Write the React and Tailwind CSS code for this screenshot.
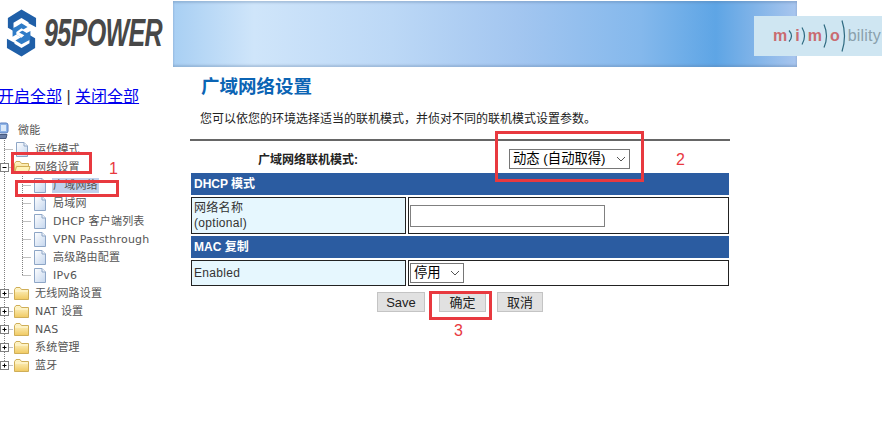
import React from "react";

const cjk = "font-['Liberation_Sans','Noto_Sans_CJK_SC',sans-serif]";
const treeFont = "font-['DejaVu_Sans','Noto_Sans_CJK_SC',sans-serif]";

function Lines({ cells }) {
  // every cell is 18x18, same idea as the line gifs of a dtree menu
  return (
    <svg width={cells.length * 18} height="18" className="shrink-0">
      {cells.map((c, i) => {
        const x = i * 18 + 9.5;
        const dots = { stroke: "#808080", strokeWidth: 1, strokeDasharray: "1 1", fill: "none" };
        return (
          <g key={i}>
            {(c === "bar" || c === "tee" || c === "plus-mid" || c === "minus-mid") && (
              <path d={`M${x} 0V18`} {...dots} />
            )}
            {(c === "end" || c === "plus-end") && <path d={`M${x} 0V9`} {...dots} />}
            {c !== "bar" && c !== "empty" && <path d={`M${x} 9.5H${i * 18 + 18}`} {...dots} />}
            {(c === "plus-mid" || c === "minus-mid" || c === "plus-end") && (
              <g>
                <rect x={x - 4} y="5.5" width="8" height="8" fill="#fff" stroke="#808080" />
                <path d={`M${x - 2} 9.5H${x + 2}`} stroke="#000" />
                {c !== "minus-mid" && <path d={`M${x} 7.5V11.5`} stroke="#000" />}
              </g>
            )}
          </g>
        );
      })}
    </svg>
  );
}

function PageIcon() {
  return (
    <svg width="18" height="18" viewBox="0 0 18 18" className="shrink-0">
      <defs>
        <linearGradient id="pg" x1="0" y1="0" x2="1" y2="1">
          <stop offset="0" stopColor="#ffffff" />
          <stop offset="1" stopColor="#c4d6ee" />
        </linearGradient>
      </defs>
      <path d="M3.5 2.5H11L14.5 6V16.5H3.5Z" fill="url(#pg)" stroke="#8ea6c6" />
      <path d="M11 2.5V6H14.5" fill="#eef3fa" stroke="#8ea6c6" />
    </svg>
  );
}

function FolderIcon({ open }) {
  return (
    <svg width="18" height="18" viewBox="0 0 18 18" className="shrink-0">
      <defs>
        <linearGradient id="fd" x1="0" y1="0" x2="0" y2="1">
          <stop offset="0" stopColor="#fff8d0" />
          <stop offset="1" stopColor="#f0c960" />
        </linearGradient>
      </defs>
      <path d="M1.5 15.5V5.5L3 3.5H7L8.5 5.5H15.5V15.5Z" fill="url(#fd)" stroke="#cfae58" />
      {open ? (
        <path d="M1.5 15.5L3.5 8.5H17L15 15.5Z" fill="#fff3b8" stroke="#cfae58" />
      ) : (
        <path d="M2 7H15" stroke="#fff8d8" />
      )}
    </svg>
  );
}

function GlobeIcon() {
  return (
    <svg width="18" height="18" viewBox="0 0 18 18" className="shrink-0">
      <rect x="4" y="1" width="9" height="10" rx="2" fill="#8fb4e6" stroke="#5a7fc0" />
      <rect x="6" y="3" width="5" height="6" fill="#dbe9fa" />
      <path d="M3 12.5H12L11 16.5H5Z" fill="#6a7fa8" stroke="#46597e" />
    </svg>
  );
}

function TreeRow({ lines, icon, label, selected }) {
  return (
    <div className="flex h-[18px] items-center">
      <Lines cells={lines} />
      {icon}
      <span
        className={`ml-[3px] whitespace-nowrap px-[1px] leading-[15px] text-[#555] ${selected ? "bg-[#c0d2ec]" : ""}`}
      >
        {label}
      </span>
    </div>
  );
}

function Sidebar() {
  return (
    <aside className="w-[190px] shrink-0">
      <div className={`-ml-[2px] mt-[17px] text-[16px] leading-[22px] text-[#333] ${cjk}`}>
        <a href="#" className="text-[#0000ee] underline">开启全部</a>
        <span> | </span>
        <a href="#" className="text-[#0000ee] underline">关闭全部</a>
      </div>
      <div className={`-ml-[5px] mt-[14px] text-[11px] tracking-[0.2px] ${treeFont}`}>
        <div className="flex h-[18px] items-center">
          <GlobeIcon />
          <span className="ml-[5px] text-[#555]">微能</span>
        </div>
        <TreeRow lines={["tee"]} icon={<PageIcon />} label="运作模式" />
        <TreeRow lines={["minus-mid"]} icon={<FolderIcon open />} label="网络设置" />
        <TreeRow lines={["bar", "tee"]} icon={<PageIcon />} label="广域网络" selected />
        <TreeRow lines={["bar", "tee"]} icon={<PageIcon />} label="局域网" />
        <TreeRow lines={["bar", "tee"]} icon={<PageIcon />} label="DHCP 客户端列表" />
        <TreeRow lines={["bar", "tee"]} icon={<PageIcon />} label="VPN Passthrough" />
        <TreeRow lines={["bar", "tee"]} icon={<PageIcon />} label="高级路由配置" />
        <TreeRow lines={["bar", "end"]} icon={<PageIcon />} label="IPv6" />
        <TreeRow lines={["plus-mid"]} icon={<FolderIcon />} label="无线网路设置" />
        <TreeRow lines={["plus-mid"]} icon={<FolderIcon />} label="NAT 设置" />
        <TreeRow lines={["plus-mid"]} icon={<FolderIcon />} label="NAS" />
        <TreeRow lines={["plus-mid"]} icon={<FolderIcon />} label="系统管理" />
        <TreeRow lines={["plus-end"]} icon={<FolderIcon />} label="蓝牙" />
      </div>
    </aside>
  );
}

function Logo() {
  return (
    <div className="flex h-[64px] w-[173px] shrink-0 items-center pl-[6px]">
      <svg width="31" height="52" viewBox="0 0 33 52" className="shrink-0">
        <path d="M16.5 1L32 10V20L24 15.5V14.5L16.5 10L8 15V24L2 20.5V10Z" fill="#1f5fa8" />
        <path d="M16.5 51L1 42V32L9 36.5V37.5L16.5 42L25 37V28L31 31.5V42Z" fill="#1f5fa8" />
        <path d="M11 19L16.5 15.5L23 19.5L17 23L22 26L26 24V33L16.5 38L10 34L16 30.5L11 27.5L7 30V21Z" fill="#2f7cc8" />
        <path d="M16.5 21L19 22.5L14 25.5L19.5 28.5L16.5 31L11 27.5V25Z" fill="#ffffff" />
      </svg>
      <span className="ml-[7px] origin-left scale-x-[0.66] font-['Liberation_Sans',sans-serif] text-[38px] font-bold italic leading-none tracking-[-1px] text-[#484848]">
        95POWER
      </span>
    </div>
  );
}

function Arc({ h }) {
  return (
    <svg width="6" height={h} viewBox={`0 0 6 ${h}`} fill="none" stroke="#2e6a80" strokeWidth="1.2" className="mx-[1px] shrink-0">
      <path d={`M1 0.5Q6 ${h / 2} 1 ${h - 0.5}`} />
    </svg>
  );
}

function Banner() {
  return (
    <div className="relative h-[66px] w-[624px] shrink-0 bg-[linear-gradient(90deg,#a8cff3_0%,#cfe5fa_13%,#bcd8f6_35%,#a3c6f0_55%,#84b8ec_75%,#5ea5e5_87%,#7fb3e8_93%,#a9c6ee_100%)] shadow-[inset_0_2px_2px_rgba(90,120,160,0.3),inset_0_-2px_2px_rgba(90,120,160,0.3)]">
      <div className="absolute left-[581px] top-[15px] flex h-[40px] w-[128px] items-center bg-[#cfe6f2] pl-[19px] font-['Liberation_Sans',sans-serif] text-[16px] leading-none">
        <b className="text-[#c96b70]">m</b>
        <Arc h={12} />
        <b className="text-[#c96b70]">i</b>
        <Arc h={18} />
        <b className="text-[#c96b70]">m</b>
        <Arc h={24} />
        <b className="text-[#c96b70]">o</b>
        <Arc h={32} />
        <span className="tracking-[0.2px] text-[#8aa0ac]">bility</span>
      </div>
    </div>
  );
}

function SectionBar({ children }) {
  return (
    <div className="flex h-[22px] items-center bg-[#2b5ca1] pl-[3px] text-[12px] font-bold text-white">
      {children}
    </div>
  );
}

function FormRow({ height, label, children }) {
  return (
    <div className={`flex gap-[2px] ${height}`}>
      <div className="flex w-[215px] shrink-0 items-center border border-[#222] bg-[#e6f7fe] pl-[2px] text-[12px] leading-[15px] tracking-[0.3px] text-[#333]">
        {label}
      </div>
      <div className="flex flex-1 items-center border border-[#222] pl-[1px]">{children}</div>
    </div>
  );
}

function Button({ width, children }) {
  return (
    <button className={`h-[20px] border border-[#c4c4c4] bg-[#e1e1e1] text-[13px] leading-none text-[#222] ${width}`}>
      {children}
    </button>
  );
}

function NativeSelect({ width, children }) {
  return (
    <div className={`flex h-[20px] items-center justify-between border border-[#767676] bg-white pl-[3px] pr-[2px] text-[13.33px] text-black ${width}`}>
      <span>{children}</span>
      <svg width="12" height="12" viewBox="0 0 12 12" fill="none" stroke="#555" strokeWidth="1">
        <path d="M2 4L6 8L10 4" />
      </svg>
    </div>
  );
}

function Main() {
  return (
    <main className={`w-[540px] ${cjk}`}>
      <h1 className="ml-[11px] mt-[5px] text-[18.5px] font-bold leading-[26px] text-[#0b64b4]">广域网络设置</h1>
      <p className="ml-[10px] mt-[10px] text-[12px] leading-[18px] text-[#222]">
        您可以依您的环境选择适当的联机模式，并侦对不同的联机模式设置参数。
      </p>
      <div className="mt-[11px] h-[2px] bg-[#666]" />

      <div className="ml-[1px] w-[538px]">
        <div className="flex h-[32px] items-center">
          <div className="w-[232px] pl-[2px] pt-[6px] text-center text-[12px] font-bold text-[#222]">广域网络联机模式:</div>
          <div className="ml-[86px] mt-[3px]">
            <NativeSelect width="w-[121px]">动态 (自动取得)</NativeSelect>
          </div>
        </div>
        <SectionBar>DHCP 模式</SectionBar>
        <div className="mt-[2px]">
          <FormRow height="h-[37px]" label={<span>网络名称<br />(optional)</span>}>
            <div className="h-[22px] w-[195px] border border-[#808080] bg-white" />
          </FormRow>
        </div>
        <div className="mt-[2px]">
          <SectionBar>MAC 复制</SectionBar>
        </div>
        <div className="mt-[2px]">
          <FormRow height="h-[26px]" label="Enabled">
            <NativeSelect width="w-[54px]">停用</NativeSelect>
          </FormRow>
        </div>
        <div className="mt-[6px] flex pl-[186px]">
          <Button width="w-[48px] mr-[14px]">Save</Button>
          <Button width="w-[47px] mr-[11px]">确定</Button>
          <Button width="w-[46px]">取消</Button>
        </div>
      </div>
    </main>
  );
}

function Note({ className, children }) {
  return <div className={`absolute text-[#e8393f] ${className}`}>{children}</div>;
}

export default function App() {
  return (
    <div className="relative h-[421px] w-[892px] overflow-hidden bg-white">
      <header className="flex h-[69px] pt-[1px]">
        <Logo />
        <Banner />
      </header>
      <div className="flex">
        <Sidebar />
        <Main />
      </div>

      {/* red markers over the page */}
      <Note className="left-[11px] top-[152px] h-[22px] w-[81px] border-[3px] border-[#e8393f]" />
      <Note className="left-[15px] top-[180px] h-[17px] w-[104px] border-[3px] border-[#e8393f]" />
      <Note className="left-[495px] top-[131px] h-[51px] w-[149px] border-[3px] border-[#e8393f]" />
      <Note className="left-[429px] top-[291px] h-[29px] w-[63px] border-[3px] border-[#e8393f]" />
      <Note className="left-[109px] top-[160px] font-['Liberation_Sans',sans-serif] text-[16px] leading-[18px]">1</Note>
      <Note className="left-[676px] top-[151px] font-['Liberation_Sans',sans-serif] text-[16px] leading-[18px]">2</Note>
      <Note className="left-[454px] top-[322px] font-['Liberation_Sans',sans-serif] text-[16px] leading-[18px]">3</Note>
    </div>
  );
}
